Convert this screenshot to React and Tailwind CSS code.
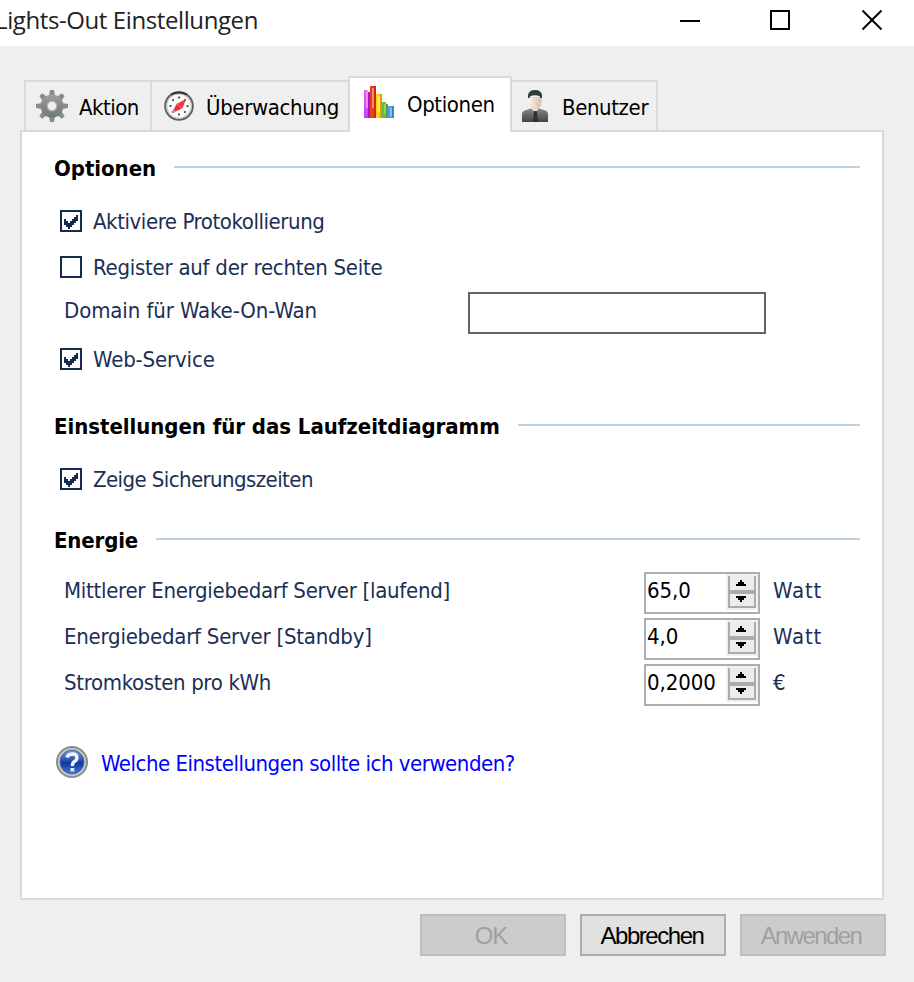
import { clsx } from "clsx";

function GearIcon() {
  return (
    <svg className="h-8 w-8 shrink-0" viewBox="0 0 32 32">
      <defs>
        <linearGradient id="gear" x1="0" y1="0" x2="0" y2="1">
          <stop offset="0" stopColor="#a3a39c" />
          <stop offset="0.5" stopColor="#868886" />
          <stop offset="1" stopColor="#6f7a7c" />
        </linearGradient>
      </defs>
      {[0, 45, 90, 135].map((deg) => (
        <path key={deg} d="M14 0h4l1 6h-6z M14 32h4l1-6h-6z" fill="#8a8c8a" transform={`rotate(${deg} 16 16)`} />
      ))}
      <circle cx="16" cy="16" r="11.5" fill="url(#gear)" />
      <circle cx="16" cy="16" r="5.5" fill="#a9adab" />
      <circle cx="16" cy="16" r="4.2" fill="#f0f0f0" />
    </svg>
  );
}

function CompassIcon() {
  return (
    <svg className="h-[30px] w-[30px] shrink-0" viewBox="0 0 30 30">
      <circle cx="15" cy="15" r="13.8" fill="#fcfcfc" stroke="#5d6264" strokeWidth="2" />
      <circle cx="15" cy="15" r="12.2" fill="none" stroke="#bfc2c3" strokeWidth="1.2" />
      <path d="M7 3.6q8-4 16 0" fill="none" stroke="#333" strokeWidth="2" />
      {[0, 45, 90, 135, 180, 225, 270, 315].map((deg) => (
        <rect key={deg} x="14.2" y="5.6" width="1.8" height="1.8" fill="#333" transform={`rotate(${deg} 15 15)`} />
      ))}
      <path d="M22 8L18.5 17.5 12.5 13z" fill="#f5393f" />
      <path d="M8 22L12.5 13l5.5 4.5z" fill="#ef2f38" />
      <path d="M8 22L9.5 18l2.5 2.5z" fill="#f7787c" />
    </svg>
  );
}

function ChartIcon() {
  return (
    <svg className="h-8 w-[30px] shrink-0" viewBox="0 0 30 32" shapeRendering="crispEdges">
      <defs>
        <linearGradient id="violet" x1="0" y1="0" x2="0" y2="1">
          <stop offset="0" stopColor="#ee5cf0" />
          <stop offset="1" stopColor="#b944ff" />
        </linearGradient>
        <linearGradient id="red" x1="0" y1="0" x2="0" y2="1">
          <stop offset="0" stopColor="#e03c22" />
          <stop offset="1" stopColor="#f04018" />
        </linearGradient>
      </defs>
      <rect x="0" y="4" width="4" height="28" fill="url(#violet)" />
      <rect x="4" y="6" width="2" height="26" fill="#a418c8" />
      <rect x="2" y="4" width="2" height="18" fill="#f48cf4" />
      <rect x="6" y="0" width="6" height="32" fill="url(#red)" />
      <rect x="8" y="2" width="2" height="20" fill="#f98a70" />
      <rect x="10" y="0" width="2" height="32" fill="#cc2a10" />
      <rect x="12" y="8" width="4" height="24" fill="#fbd21c" />
      <rect x="14" y="10" width="2" height="16" fill="#fdf03c" />
      <rect x="16" y="8" width="2" height="24" fill="#dd9c08" />
      <rect x="18" y="16" width="4" height="16" fill="#6fb83c" />
      <rect x="20" y="18" width="2" height="10" fill="#93cf66" />
      <rect x="22" y="18" width="2" height="14" fill="#4f9c38" />
      <rect x="24" y="20" width="4" height="12" fill="#4f9fe4" />
      <rect x="26" y="22" width="2" height="8" fill="#82bff2" />
      <rect x="28" y="20" width="2" height="12" fill="#3f7fc4" />
    </svg>
  );
}

function UserIcon() {
  return (
    <svg className="h-8 w-[26px] shrink-0" viewBox="0 0 26 32">
      <defs>
        <linearGradient id="suit" x1="0" y1="0" x2="0" y2="1">
          <stop offset="0" stopColor="#858787" />
          <stop offset="1" stopColor="#414547" />
        </linearGradient>
        <linearGradient id="skin" x1="0" y1="0" x2="1" y2="0">
          <stop offset="0" stopColor="#faf1ec" />
          <stop offset="1" stopColor="#d3bdb1" />
        </linearGradient>
      </defs>
      <path d="M0 32v-8q0-3 4-4l5-1.5h8l5 1.5q4 1 4 4v8z" fill="url(#suit)" />
      <path d="M8 17h10l-4.500 6z" fill="#e8e4e2" />
      <path d="M12.200 21h2.600l1.200 11h-5z" fill="#2b2d2e" />
      <path d="M6.500 7h13v5q-1 8-6.500 8t-6.500-8z" fill="url(#skin)" />
      <path d="M6 8V5q1-5 7-5t7 5v3h-1.500l-1-2q-4.500-1.500-9 0l-1 2z" fill="#2f3c3a" />
    </svg>
  );
}

function HelpIcon() {
  return (
    <svg className="h-8 w-8 shrink-0" viewBox="0 0 32 32">
      <defs>
        <linearGradient id="help" x1="0" y1="0" x2="0" y2="1">
          <stop offset="0" stopColor="#7d9ad6" />
          <stop offset="0.4" stopColor="#2f55b4" />
          <stop offset="0.55" stopColor="#1237a0" />
          <stop offset="1" stopColor="#3f7be0" />
        </linearGradient>
      </defs>
      <circle cx="16" cy="16" r="15" fill="#c9cbcc" stroke="#8c8c8c" strokeWidth="2" />
      <circle cx="16" cy="16" r="12" fill="url(#help)" stroke="#4a68ac" strokeWidth="1" />
      <path d="M11 11.500q1-3.500 5.500-3.500 4.500 0 4.500 3.800 0 2.400-2.600 3.700-2 1-2 4.500" fill="none" stroke="#f4f6fa" strokeWidth="3.400" />
      <rect x="14.500" y="22" width="3.800" height="3.500" fill="#e4e9f4" />
    </svg>
  );
}

const TABS = [
  { label: "Aktion", icon: GearIcon, box: "w-[126px] border-l-2 pl-[10px] gap-[11px]", text: "tracking-[-0.5px]" },
  { label: "Überwachung", icon: CompassIcon, box: "w-[198px] border-l-2 pl-[12px] gap-[12px]", text: "tracking-[-0.35px]" },
  { label: "Optionen", icon: ChartIcon, box: "w-[164px] border-x-2 pl-[14px] gap-[13px]", text: "tracking-[-0.4px]", active: true },
  { label: "Benutzer", icon: UserIcon, box: "w-[146px] border-r-2 pl-[10px] gap-[14px]", text: "tracking-[-0.4px]" },
];

const ENERGY = [
  { label: "Mittlerer Energiebedarf Server [laufend]", value: "65,0", unit: "Watt", text: "tracking-[-0.28px]" },
  { label: "Energiebedarf Server [Standby]", value: "4,0", unit: "Watt", text: "tracking-[-0.23px]" },
  { label: "Stromkosten pro kWh", value: "0,2000", unit: "€", text: "tracking-[-0.34px]" },
];

function TitleBar() {
  return (
    <header className="flex h-[46px] justify-between bg-white pr-[32px]">
      <h1 className="-ml-[5px] font-['Open_Sans',sans-serif] text-[24px] leading-[39px] tracking-[-0.4px] text-[#222]">
        Lights-Out Einstellungen
      </h1>
      <div className="flex h-10 items-center">
        <button className="mt-[2px] h-[2px] w-5 bg-black" aria-label="Minimieren" />
        <button className="ml-[70px] h-5 w-5 border-2 border-black" aria-label="Maximieren" />
        <button className="ml-[72px]" aria-label="Schließen">
          <svg className="h-5 w-5" viewBox="0 0 20 20">
            <path d="M.5.5l19 19M19.500.5l-19 19" stroke="#000" strokeWidth="2" />
          </svg>
        </button>
      </div>
    </header>
  );
}

function Tab({ tab }) {
  const Icon = tab.icon;
  return (
    <button
      className={clsx(
        "flex items-center border-t-2 border-[#d9d9d9] text-black",
        tab.box,
        tab.active ? "relative -mb-[2px] h-[56px] bg-white pb-[6px]" : "h-[50px]"
      )}
    >
      <Icon />
      <span className={clsx(tab.active ? "pt-[5px]" : "pt-[4px]", tab.text)}>{tab.label}</span>
    </button>
  );
}

function SectionTitle({ children, className }) {
  return (
    <div className={clsx("flex h-9 items-center", className)}>
      <h2 className="pt-px font-bold text-black">{children}</h2>
      <div className="mb-[2px] h-[2px] flex-1 bg-[#bdd3e4]" />
    </div>
  );
}

function Check({ label, checked, className, text }) {
  return (
    <label className={clsx("flex h-[46px] items-center pl-[6px]", className)}>
      <span className="flex h-[22px] w-[22px] items-center justify-center border-2 border-[#152a4c]">
        {checked && (
          <svg className="h-[18px] w-[18px]" viewBox="0 0 18 18" shapeRendering="crispEdges">
            <path
              d="M2 7h2v2h2v2h2v-2h2v-2h2v-2h2v-2h2v6h-2v2h-2v2h-2v2h-2v2H6v-2H4v-2H2z"
              fill="#152a4c"
            />
          </svg>
        )}
      </span>
      <span className={clsx("ml-[11px] pt-[2px]", text)}>{label}</span>
    </label>
  );
}

function Spinner({ value }) {
  return (
    <div className="mt-[2px] flex h-[42px] w-[116px] border-2 border-[#adadb4] bg-white">
      <span className="flex-1 pl-px leading-[34px] tracking-[-0.1px] text-black">{value}</span>
      <div className="h-9 w-8 bg-[#f0f0f0] px-[2px] pt-[2px]">
        <div className="flex h-4 justify-center border-x-2 border-b-2 border-[#ababab] bg-[#ececec] pt-[4px]">
          <svg className="mr-[2px] h-[6px] w-[10px]" viewBox="0 0 10 6">
            <path d="M4 0h2v2h2v2h2v2H0V4h2V2h2z" fill="#000" shapeRendering="crispEdges" />
          </svg>
        </div>
        <div className="flex h-4 justify-center border-2 border-[#ababab] bg-[#ececec] pt-[2px]">
          <svg className="mr-[2px] h-[6px] w-[10px]" viewBox="0 0 10 6">
            <path d="M0 0h10v2H8v2H6v2H4V4H2V2H0z" fill="#000" shapeRendering="crispEdges" />
          </svg>
        </div>
      </div>
    </div>
  );
}

function DialogButton({ children, disabled, text }) {
  return (
    <button
      disabled={disabled}
      className={clsx(
        "flex h-[42px] w-[146px] items-center justify-center border-2 font-['Liberation_Sans',Arial,sans-serif] text-[24px] leading-none",
        disabled ? "border-[#bfbfbf] bg-[#cccccc] text-[#a0a0a0]" : "border-[#adadad] bg-[#e1e1e1] text-black"
      )}
    >
      <span className={clsx("pt-[2px]", text)}>{children}</span>
    </button>
  );
}

export default function App() {
  return (
    <div className="h-[982px] w-[914px] overflow-hidden whitespace-nowrap bg-[#efefef] font-['DejaVu_Sans_Condensed','DejaVu_Sans',sans-serif] text-[22px] leading-[26px] text-[#1b2f55]">
      <TitleBar />

      <nav className="flex h-[84px] items-end pl-6">
        {TABS.map((tab) => (
          <Tab key={tab.label} tab={tab} />
        ))}
      </nav>

      <main className="ml-5 h-[770px] w-[864px] border-2 border-[#d9d9d9] bg-white pl-8 pr-[22px] pt-[18px]">
        {/* Optionen */}
        <SectionTitle><span className="mr-[18px] tracking-[-0.05px]">Optionen</span></SectionTitle>
        <Check className="mt-3" label="Aktiviere Protokollierung" text="tracking-[-0.43px]" checked />
        <Check label="Register auf der rechten Seite" text="tracking-[-0.25px]" />
        <div className="flex h-[46px] items-start pl-[10px]">
          <label className="w-[404px] leading-[42px] tracking-[-0.1px]">Domain für Wake-On-Wan</label>
          <input className="mt-[2px] h-[42px] w-[298px] border-2 border-[#666666] bg-white" />
        </div>
        <Check label="Web-Service" text="tracking-[-0.15px]" checked />

        {/* Laufzeitdiagramm */}
        <SectionTitle className="mt-[26px]">
          <span className="mr-[18px] tracking-[-0.05px]">Einstellungen für das Laufzeitdiagramm</span>
        </SectionTitle>
        <Check className="mt-3" label="Zeige Sicherungszeiten" text="tracking-[-0.58px]" checked />

        {/* Energie */}
        <SectionTitle className="mt-5"><span className="mr-[18px] tracking-[-0.15px]">Energie</span></SectionTitle>
        <div className="mt-3">
          {ENERGY.map((row) => (
            <div key={row.label} className="flex h-[46px] items-start pl-[10px]">
              <span className={clsx("w-[580px] leading-[42px]", row.text)}>{row.label}</span>
              <Spinner value={row.value} />
              <span className="ml-[13px] leading-[42px] tracking-[0.8px]">{row.unit}</span>
            </div>
          ))}
        </div>

        <a className="mt-[31px] flex h-[46px] items-center gap-[13px] pl-[2px] text-[#0000ff]">
          <HelpIcon />
          <span className="pt-[4px] tracking-[-0.48px]">Welche Einstellungen sollte ich verwenden?</span>
        </a>
      </main>

      <footer className="flex justify-end gap-[14px] pr-7 pt-[14px]">
        <DialogButton disabled text="tracking-[-1px] pr-1">OK</DialogButton>
        <DialogButton text="tracking-[-1.45px] pr-[2px]">Abbrechen</DialogButton>
        <DialogButton disabled text="tracking-[-1.6px] pr-[4px]">Anwenden</DialogButton>
      </footer>
    </div>
  );
}
